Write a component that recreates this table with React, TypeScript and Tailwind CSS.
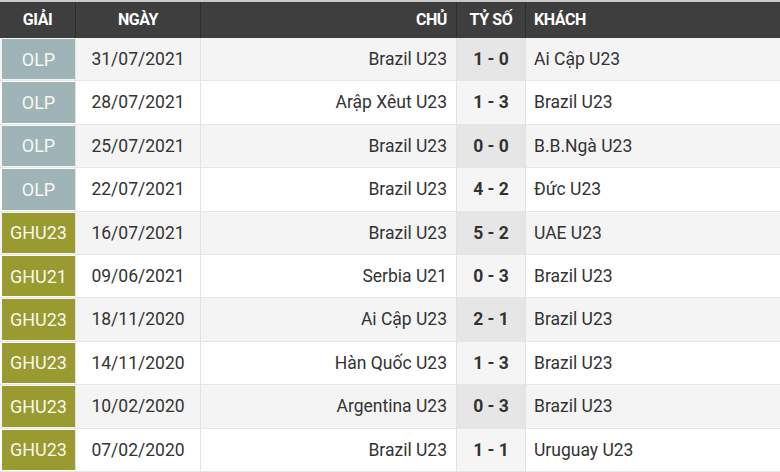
import React from 'react';

type Match = { league: string; date: string; home: string; score: string; away: string };

const matches: Match[] = [
  { league: 'OLP', date: '31/07/2021', home: 'Brazil U23', score: '1 - 0', away: 'Ai Cập U23' },
  { league: 'OLP', date: '28/07/2021', home: 'Arập Xêut U23', score: '1 - 3', away: 'Brazil U23' },
  { league: 'OLP', date: '25/07/2021', home: 'Brazil U23', score: '0 - 0', away: 'B.B.Ngà U23' },
  { league: 'OLP', date: '22/07/2021', home: 'Brazil U23', score: '4 - 2', away: 'Đức U23' },
  { league: 'GHU23', date: '16/07/2021', home: 'Brazil U23', score: '5 - 2', away: 'UAE U23' },
  { league: 'GHU21', date: '09/06/2021', home: 'Serbia U21', score: '0 - 3', away: 'Brazil U23' },
  { league: 'GHU23', date: '18/11/2020', home: 'Ai Cập U23', score: '2 - 1', away: 'Brazil U23' },
  { league: 'GHU23', date: '14/11/2020', home: 'Hàn Quốc U23', score: '1 - 3', away: 'Brazil U23' },
  { league: 'GHU23', date: '10/02/2020', home: 'Argentina U23', score: '0 - 3', away: 'Brazil U23' },
  { league: 'GHU23', date: '07/02/2020', home: 'Brazil U23', score: '1 - 1', away: 'Uruguay U23' },
];

const cols = 'grid grid-cols-[76px_125px_256px_69px_1fr]';

export default function App() {
  return (
    <div className="w-[780px] h-[472px] overflow-hidden bg-white font-['Roboto','Liberation_Sans',sans-serif]">
      {/* Header */}
      <div className={`${cols} h-[38px] border-t-2 border-[#c9c9c9] bg-[#3e3e3e] text-white font-bold text-[16px] tracking-tight`}>
        <div className="flex items-center justify-center border-r border-[#2e2e2e]">GIẢI</div>
        <div className="flex items-center justify-center border-r border-[#2e2e2e]">NGÀY</div>
        <div className="flex items-center justify-end pr-[9px] border-r border-[#2e2e2e]">CHỦ</div>
        <div className="flex items-center justify-center border-r border-[#2e2e2e]">TỶ SỐ</div>
        <div className="flex items-center pl-[8px]">KHÁCH</div>
      </div>

      {/* Rows */}
      {matches.map((m, i) => {
        const odd = i % 2 === 0;
        const olp = m.league === 'OLP';
        return (
          <div
            key={i}
            className={`${cols} h-[43.4px] border-b border-[#e6e6e6] text-[17.5px] text-[#333] ${odd ? 'bg-[#f4f4f4]' : 'bg-white'}`}
          >
            <div className="pl-[2px] py-[1px] border-r border-[#e2e2e2]">
              <div
                className={`h-full flex items-center justify-center text-[18px] text-[#f8f8f0] ${olp ? 'bg-[#9fb4b6]' : 'bg-[#999a2f]'}`}
              >
                {m.league}
              </div>
            </div>
            <div className="flex items-center justify-center border-r border-[#e2e2e2]">{m.date}</div>
            <div className="flex items-center justify-end pr-[9px] border-r border-[#e2e2e2]">{m.home}</div>
            <div
              className={`flex items-center justify-center font-bold border-r border-[#e2e2e2] ${odd ? 'bg-[#e6e6e6]' : 'bg-[#f5f5f5]'}`}
            >
              {m.score}
            </div>
            <div className="flex items-center pl-[8px]">{m.away}</div>
          </div>
        );
      })}
    </div>
  );
}
